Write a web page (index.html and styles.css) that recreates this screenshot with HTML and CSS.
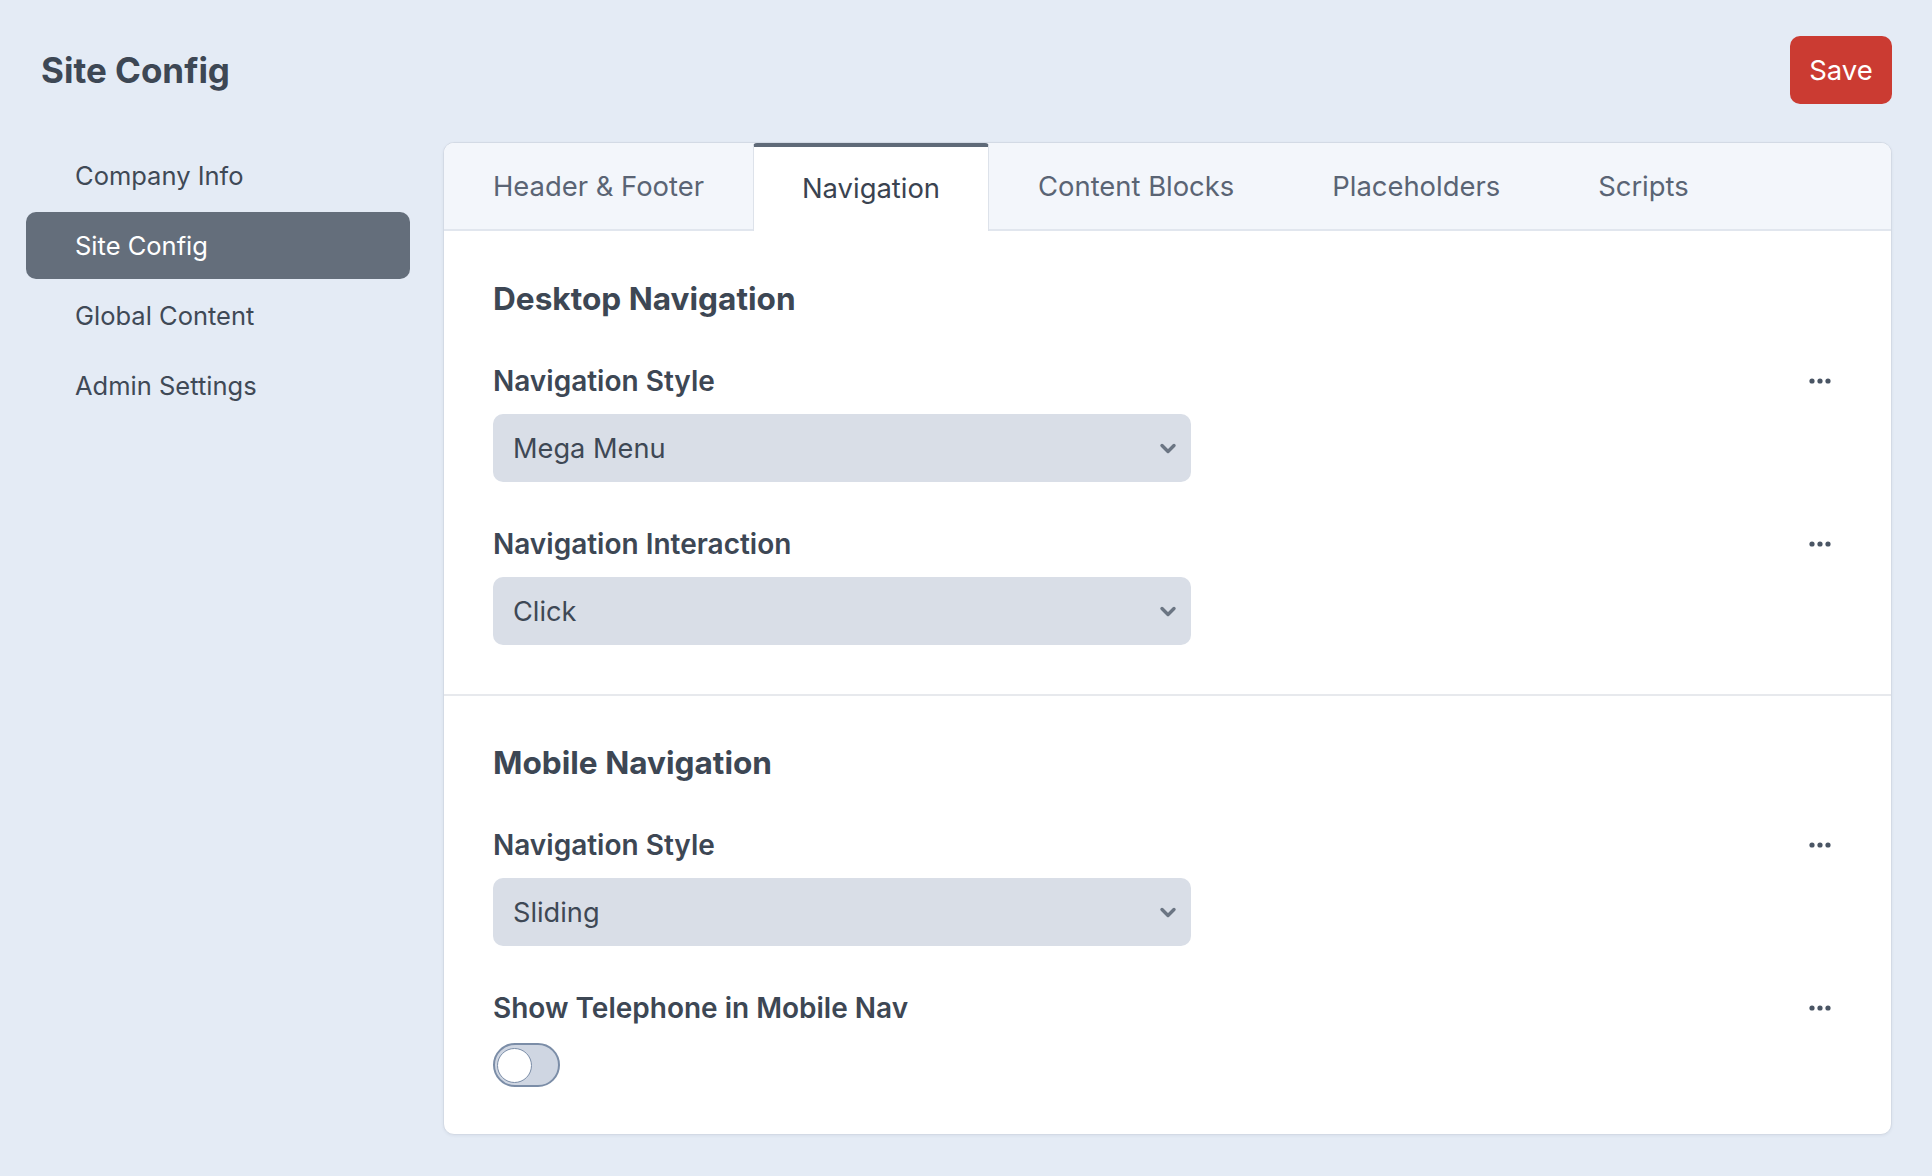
FILE: index.html
```html
<!DOCTYPE html>
<html lang="en">
<head>
<meta charset="utf-8">
<title>Site Config</title>
<link rel="stylesheet" href="styles.css">
</head>
<body>
<div class="page">
  <header class="topbar">
    <h1 class="title">Site Config</h1>
    <button class="save">Save</button>
  </header>
  <div class="layout">
    <nav class="sidenav">
      <a class="navitem">Company Info</a>
      <a class="navitem active">Site Config</a>
      <a class="navitem">Global Content</a>
      <a class="navitem">Admin Settings</a>
    </nav>
    <main class="card">
      <div class="tabs">
        <div class="tab">Header &amp; Footer</div>
        <div class="tab active">Navigation</div>
        <div class="tab">Content Blocks</div>
        <div class="tab">Placeholders</div>
        <div class="tab">Scripts</div>
      </div>
      <section class="section">
        <h2 class="section-title">Desktop Navigation</h2>
        <div class="field">
          <div class="field-head">
            <span class="label">Navigation Style</span>
            <button class="more"><svg width="22" height="6" viewBox="0 0 22 6"><circle cx="3" cy="3" r="2.6"/><circle cx="11" cy="3" r="2.6"/><circle cx="19" cy="3" r="2.6"/></svg></button>
          </div>
          <div class="select"><span>Mega Menu</span><svg class="chev" width="18" height="11" viewBox="0 0 18 11"><path d="M3 2.5 L9 8.5 L15 2.5"/></svg></div>
        </div>
        <div class="field">
          <div class="field-head">
            <span class="label">Navigation Interaction</span>
            <button class="more"><svg width="22" height="6" viewBox="0 0 22 6"><circle cx="3" cy="3" r="2.6"/><circle cx="11" cy="3" r="2.6"/><circle cx="19" cy="3" r="2.6"/></svg></button>
          </div>
          <div class="select"><span>Click</span><svg class="chev" width="18" height="11" viewBox="0 0 18 11"><path d="M3 2.5 L9 8.5 L15 2.5"/></svg></div>
        </div>
      </section>
      <section class="section second">
        <h2 class="section-title">Mobile Navigation</h2>
        <div class="field">
          <div class="field-head">
            <span class="label">Navigation Style</span>
            <button class="more"><svg width="22" height="6" viewBox="0 0 22 6"><circle cx="3" cy="3" r="2.6"/><circle cx="11" cy="3" r="2.6"/><circle cx="19" cy="3" r="2.6"/></svg></button>
          </div>
          <div class="select"><span>Sliding</span><svg class="chev" width="18" height="11" viewBox="0 0 18 11"><path d="M3 2.5 L9 8.5 L15 2.5"/></svg></div>
        </div>
        <div class="field">
          <div class="field-head">
            <span class="label">Show Telephone in Mobile Nav</span>
            <button class="more"><svg width="22" height="6" viewBox="0 0 22 6"><circle cx="3" cy="3" r="2.6"/><circle cx="11" cy="3" r="2.6"/><circle cx="19" cy="3" r="2.6"/></svg></button>
          </div>
          <div class="toggle"><span class="knob"></span></div>
        </div>
      </section>
    </main>
  </div>
</div>
</body>
</html>
```
FILE: styles.css
```css
* { box-sizing: border-box; }
html, body { margin: 0; padding: 0; }
body {
  background: #e4ebf5;
  font-family: Inter, "Noto Sans", "Liberation Sans", sans-serif;
  color: #3e4855;
}
.page {
  padding: 36px 40px 0 26px;
  min-height: 1176px;
}
.topbar {
  display: flex;
  justify-content: space-between;
  align-items: center;
  height: 68px;
}
.title {
  margin: 0 0 0 15px;
  font-size: 35px;
  font-weight: 700;
  color: #3d4754;
}
.save {
  width: 102px;
  height: 68px;
  background: #cb3b32;
  color: #fff;
  border: none;
  border-radius: 10px;
  font-family: Inter, sans-serif;
  font-size: 27.5px;
  font-weight: 400;
  padding: 0;
}
.layout {
  display: grid;
  grid-template-columns: 384px 1fr;
  column-gap: 33px;
  margin-top: 38px;
  align-items: start;
}
.sidenav {
  display: flex;
  flex-direction: column;
  gap: 3px;
}
.navitem {
  height: 67px;
  display: flex;
  align-items: center;
  padding: 0 49px;
  font-size: 25.5px;
  color: #3f4956;
  border-radius: 10px;
}
.navitem.active {
  background: #646e7b;
  color: #fff;
}
.card {
  background: #fff;
  border: 1.5px solid #d3dae5;
  border-radius: 11px;
  overflow: hidden;
  box-shadow: 0 1px 3px rgba(40, 55, 80, 0.06);
}
.tabs {
  display: flex;
  height: 88px;
  background: #f3f6fb;
  border-bottom: 2px solid #e1e6ee;
}
.tab {
  display: flex;
  align-items: center;
  padding: 0 49px;
  font-size: 27.4px;
  color: #5a6474;
  height: 88px;
  padding-bottom: 2px;
}
.tab.active {
  background: #fff;
  color: #3a4350;
  border-top: 4px solid #5f6a78;
  border-left: 1px solid #dde2ea;
  border-right: 1px solid #dde2ea;
  border-radius: 4px 4px 0 0;
  padding: 0 48px 3px;
  height: 88px;
  margin-bottom: -2px;
}
.section {
  padding: 48px 49px 49px 49px;
}
.section.second {
  border-top: 2px solid #e7e9ed;
  padding-top: 47px;
  padding-bottom: 47px;
}
.section-title {
  margin: 0;
  font-size: 31.6px;
  line-height: 40px;
  font-weight: 650;
  color: #3d4754;
}
.field {
  margin-top: 41px;
}
.field-head {
  display: flex;
  justify-content: space-between;
  align-items: center;
  height: 42px;
}
.label {
  font-size: 28px;
  font-weight: 620;
  color: #3d4754;
}
.more {
  width: 44px;
  height: 42px;
  display: flex;
  align-items: center;
  justify-content: center;
  background: none;
  border: none;
  padding: 0;
}
.more svg { fill: #4a5564; }
.select {
  margin-top: 12px;
  width: 698px;
  height: 68px;
  background: #d9dee7;
  border-radius: 10px;
  display: flex;
  justify-content: space-between;
  align-items: center;
  padding: 0 14px 0 20px;
  font-size: 27.2px;
  color: #3e4855;
}
.chev path {
  fill: none;
  stroke: #6b7583;
  stroke-width: 3.4;
  stroke-linecap: round;
  stroke-linejoin: round;
}
.toggle {
  margin-top: 14px;
  width: 67px;
  height: 44px;
  border: 2px solid #7b8da7;
  background: #cfd6e2;
  border-radius: 22px;
  display: flex;
  align-items: center;
  padding: 0 2px;
}
.knob {
  width: 35px;
  height: 35px;
  border-radius: 50%;
  background: #fff;
  border: 1.5px solid #7b8da7;
}
```
